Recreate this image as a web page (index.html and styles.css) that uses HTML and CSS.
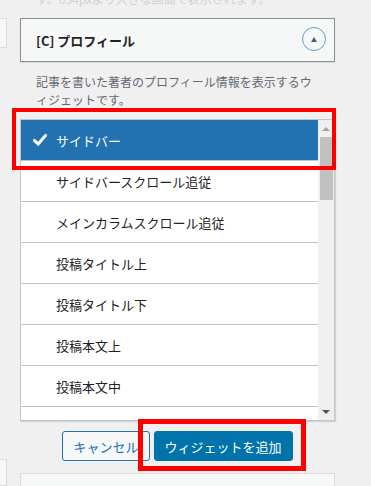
FILE: index.html
```html
<!DOCTYPE html>
<html lang="ja">
  <head>
    <meta charset="UTF-8" />
    <meta name="viewport" content="width=device-width, initial-scale=1.0" />
    <title>ウィジェットを追加</title>
    <link rel="stylesheet" href="styles.css">
  </head>
  <body>
    <div class="screen">
      <!-- left sidebar stub -->
      <aside class="rail">
        <div class="rail-box rail-top"></div>
        <div class="rail-box rail-bottom"></div>
      </aside>

      <main class="widget">
        <p class="note">す。654pxより大きな画面で表示されます。</p>

        <div class="widget-head">
          <h3 class="widget-title">[C] プロフィール</h3>
          <button class="toggle" type="button"><span class="toggle-arrow"></span></button>
        </div>

        <p class="widget-desc">記事を書いた著者のプロフィール情報を表示するウィジェットです。</p>

        <div class="area-list">
          <ul class="areas">
            <li class="area selected">
              <svg class="check" width="14" height="12" viewBox="0 0 14 12">
                <path d="M1.5 6.5 L5.2 10 L12.5 1.5" fill="none" stroke="#fff" stroke-width="3" stroke-linecap="square" />
              </svg>
              サイドバー
            </li>
            <li class="area">サイドバースクロール追従</li>
            <li class="area">メインカラムスクロール追従</li>
            <li class="area">投稿タイトル上</li>
            <li class="area">投稿タイトル下</li>
            <li class="area">投稿本文上</li>
            <li class="area">投稿本文中</li>
            <li class="area">投稿本文下</li>
          </ul>
          <div class="scrollbar">
            <span class="scroll-btn"><span class="arrow-up"></span></span>
            <span class="thumb"></span>
            <span class="scroll-btn scroll-down"><span class="arrow-down"></span></span>
          </div>
        </div>

        <div class="actions">
          <button class="btn" type="button">キャンセル</button>
          <button class="btn btn-primary" type="button">ウィジェットを追加</button>
        </div>

        <div class="next-widget"></div>

        <!-- red highlight marks -->
        <div class="mark mark-area"></div>
        <div class="mark mark-add"></div>
      </main>
    </div>
  </body>
</html>
```

FILE: styles.css
```css
html,
body {
  margin: 0;
  height: 100%;
  overflow: hidden;
}
body {
  background: #f0f0f1;
  font-family: "Noto Sans CJK JP", "Noto Sans", sans-serif;
  color: #1d2327;
}

.screen {
  display: flex;
  height: 486px;
  overflow: hidden;
}

/* Sidebar stub */
.rail {
  flex: none;
  width: 7px;
  display: flex;
  flex-direction: column;
}
.rail-box {
  box-sizing: border-box;
  margin-left: -10px;
  width: 17px;
  border: 1px solid #dcdcde;
  background: #f6f7f7;
}
.rail-top {
  margin-top: 18px;
  height: 44px;
}
.rail-bottom {
  margin-top: 411px;
  height: 40px;
}

/* Widget */
.widget {
  position: relative;
  flex: none;
  width: 315px;
  margin-left: 13px;
}
.note {
  margin: -10px 0 0;
  padding-left: 16px;
  font-size: 12px;
  line-height: 18px;
  color: #d0d1d3;
  white-space: nowrap;
}
.widget-head {
  box-sizing: border-box;
  height: 44px;
  margin-top: 10px;
  padding: 0 8px 0 15px;
  display: flex;
  align-items: center;
  justify-content: space-between;
  background: #f6f7f7;
  border: 1px solid #8c8f94;
  box-shadow: 0 1px 1px rgba(0, 0, 0, 0.08);
}
.widget-title {
  margin: 0;
  font-size: 13px;
  font-weight: 700;
}
.toggle {
  box-sizing: border-box;
  width: 24px;
  height: 24px;
  margin-top: -2px;
  padding: 0;
  display: flex;
  align-items: center;
  justify-content: center;
  background: transparent;
  border: 1.5px solid #5b9dd9;
  border-radius: 50%;
}
.toggle-arrow {
  width: 0;
  height: 0;
  border-left: 3.5px solid transparent;
  border-right: 3.5px solid transparent;
  border-bottom: 5px solid #50575e;
}
.widget-desc {
  margin: 11px 0 10px;
  padding: 0 19px 0 16px;
  font-size: 12px;
  line-height: 18px;
  color: #646970;
  line-break: loose;
}

/* Area chooser */
.area-list {
  box-sizing: border-box;
  height: 302px;
  display: flex;
  background: #fff;
  border: 1px solid #c3c4c7;
  box-shadow: 1px 1px 1px rgba(0, 0, 0, 0.12);
}
.areas {
  flex: 1;
  margin: 0;
  padding: 0;
  list-style: none;
  overflow: hidden;
}
.area {
  height: 40px;
  padding-left: 35px;
  display: flex;
  align-items: center;
  font-size: 13px;
  border-bottom: 1px solid #c3c4c7;
}
.area.selected {
  padding-left: 12px;
  background: #2271b1;
  color: #fff;
}
.check {
  margin-right: 9px;
}
.scrollbar {
  flex: none;
  width: 16px;
  display: flex;
  flex-direction: column;
  background: #f0f0f0;
}
.scroll-btn {
  height: 17px;
  display: flex;
  align-items: center;
  justify-content: center;
}
.scroll-down {
  margin-top: auto;
}
.arrow-up {
  border-left: 4px solid transparent;
  border-right: 4px solid transparent;
  border-bottom: 4px solid #a3a3a3;
}
.arrow-down {
  border-left: 4px solid transparent;
  border-right: 4px solid transparent;
  border-top: 4px solid #505050;
}
.thumb {
  height: 63px;
  margin: 0 1px 0 2px;
  background: #c1c1c1;
}

/* Buttons */
.actions {
  display: flex;
  justify-content: center;
  gap: 4px;
  margin-top: 10px;
}
.btn {
  box-sizing: border-box;
  height: 30px;
  padding: 0 10px;
  font-family: inherit;
  font-size: 13px;
  color: #2271b1;
  background: #f6f7f7;
  border: 1px solid #2271b1;
  border-radius: 3px;
}
.btn-primary {
  color: #fff;
  background: #0073aa;
  border-color: #0073aa;
}

.next-widget {
  box-sizing: border-box;
  height: 40px;
  margin-top: 12px;
  border: 1px solid #dcdcde;
  background: #f6f7f7;
}

/* Highlight marks */
.mark {
  position: absolute;
  box-sizing: border-box;
  border: 4px solid #ff0000;
}
.mark-area {
  left: -8px;
  top: 108px;
  width: 324px;
  height: 62px;
}
.mark-add {
  left: 118px;
  top: 419px;
  width: 168px;
  height: 52px;
  border-width: 5px;
}
```
